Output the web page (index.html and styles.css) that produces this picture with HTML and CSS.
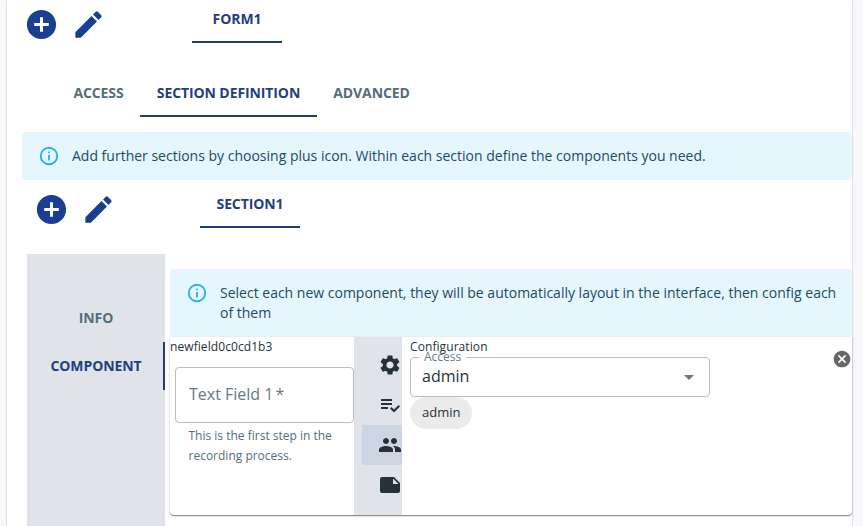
FILE: index.html
```html
<!DOCTYPE html>
<html lang="en">
<head>
<meta charset="utf-8">
<title>Form builder</title>
<link rel="stylesheet" href="styles.css">
</head>
<body>
<svg class="defs" aria-hidden="true">
  <symbol id="add" viewBox="0 0 24 24"><path d="M12 2C6.480 2 2 6.480 2 12s4.480 10 10 10 10-4.480 10-10S17.520 2 12 2zm5 11h-4v4h-2v-4H7v-2h4V7h2v4h4v2z"/></symbol>
  <symbol id="edit" viewBox="0 0 24 24"><path d="M3 17.250V21h3.750L17.810 9.940l-3.750-3.750L3 17.250zM20.710 7.040c.39-.39.39-1.020 0-1.410l-2.340-2.340a1 1 0 0 0-1.410 0l-1.830 1.830 3.750 3.750 1.830-1.830z"/></symbol>
  <symbol id="info" viewBox="0 0 24 24"><path d="M11 7h2v2h-2zm0 4h2v6h-2zm1-9a10 10 0 1 0 0 20 10 10 0 0 0 0-20zm0 18a8 8 0 1 1 0-16 8 8 0 0 1 0 16z"/></symbol>
</svg>
<main class="card">
  <div class="toolbar">
    <svg class="action"><use href="#add"/></svg>
    <svg class="action"><use href="#edit"/></svg>
    <button class="tab active form-tab">FORM1</button>
  </div>
  <nav class="tabs">
    <button class="tab">ACCESS</button>
    <button class="tab active">SECTION DEFINITION</button>
    <button class="tab">ADVANCED</button>
  </nav>
  <div class="alert">
    <svg class="alert-icon"><use href="#info"/></svg>
    <p>Add further sections by choosing plus icon. Within each section define the components you need.</p>
  </div>
  <div class="toolbar section-bar">
    <svg class="action"><use href="#add"/></svg>
    <svg class="action"><use href="#edit"/></svg>
    <button class="tab active section-tab">SECTION1</button>
  </div>
  <section class="workspace">
    <nav class="side">
      <button class="tab">INFO</button>
      <button class="tab active">COMPONENT</button>
    </nav>
    <div class="content">
      <div class="alert tall">
        <svg class="alert-icon"><use href="#info"/></svg>
        <p>Select each new component, they will be automatically layout in the interface, then config each of them</p>
      </div>
      <div class="paper">
        <div class="preview">
          <div class="caption">newfield0c0cd1b3</div>
          <div class="field">Text Field 1<span class="star">*</span></div>
          <p class="helper">This is the first step in the recording process.</p>
        </div>
        <div class="rail">
          <div class="rail-item"><svg viewBox="0 0 24 24"><path d="M19.140 12.940c.04-.3.060-.61.060-.94 0-.32-.02-.64-.07-.94l2.030-1.580c.18-.14.23-.41.12-.61l-1.920-3.320c-.12-.22-.37-.29-.59-.22l-2.390.96c-.5-.38-1.030-.7-1.620-.94l-.36-2.540c-.04-.24-.24-.41-.48-.41h-3.840c-.24 0-.43.17-.47.41l-.36 2.540c-.59.24-1.130.57-1.620.94l-2.390-.96c-.22-.08-.47 0-.59.22L2.740 8.870c-.12.21-.08.47.12.61l2.030 1.580c-.05.3-.09.63-.09.94s.02.64.07.94l-2.030 1.580c-.18.14-.23.41-.12.61l1.920 3.320c.12.22.37.29.59.22l2.390-.96c.5.38 1.030.7 1.620.94l.36 2.540c.05.24.24.41.48.41h3.840c.24 0 .44-.17.47-.41l.36-2.540c.59-.24 1.130-.56 1.620-.94l2.390.96c.22.08.47 0 .59-.22l1.920-3.320c.12-.22.070-.47-.12-.61l-2.010-1.580zM12 15.600c-1.980 0-3.600-1.620-3.600-3.600s1.620-3.600 3.600-3.600 3.600 1.620 3.600 3.600-1.620 3.600-3.600 3.600z"/></svg></div>
          <div class="rail-item"><svg viewBox="0 0 24 24"><path d="M14 10H3v2h11v-2zm0-4H3v2h11V6zM3 14h7v2H3zM20.500 11.900L22 13.400l-5.990 6-4.010-4 1.410-1.410 2.600 2.590z"/></svg></div>
          <div class="rail-item selected"><svg viewBox="0 0 24 24"><path d="M16 11c1.660 0 2.990-1.340 2.990-3S17.660 5 16 5s-3 1.340-3 3 1.340 3 3 3zm-8 0c1.660 0 2.990-1.340 2.990-3S9.660 5 8 5 5 6.340 5 8s1.340 3 3 3zm0 2c-2.330 0-7 1.170-7 3.500V19h14v-2.500c0-2.330-4.670-3.500-7-3.500zm8 0c-.29 0-.62.02-.97.050 1.160.84 1.970 1.970 1.970 3.450V19h6v-2.500c0-2.330-4.670-3.500-7-3.500z"/></svg></div>
          <div class="rail-item"><svg viewBox="0 0 24 24"><path fill-rule="evenodd" d="M4 4h12l6 6v8c0 1.100-.9 2-2 2H4c-1.100 0-2-.9-2-2V6c0-1.100.9-2 2-2zm11 1.500V11h5.500z"/></svg></div>
        </div>
        <div class="config">
          <div class="caption">Configuration</div>
          <div class="select">
            <span class="select-label">Access</span>
            <span>admin</span>
            <svg viewBox="0 0 24 24"><path d="M7 10l5 5 5-5z"/></svg>
          </div>
          <span class="chip">admin</span>
        </div>
        <svg class="close" viewBox="0 0 24 24"><path d="M12 2C6.470 2 2 6.470 2 12s4.470 10 10 10 10-4.470 10-10S17.530 2 12 2zm5 13.590L15.590 17 12 13.410 8.410 17 7 15.590 10.590 12 7 8.410 8.410 7 12 10.590 15.590 7 17 8.410 13.410 12 17 15.590z"/></svg>
      </div>
    </div>
  </section>
</main>
</body>
</html>
```
FILE: styles.css
```css
* { box-sizing: border-box; }
body {
  margin: 0;
  height: 526px;
  overflow: hidden;
  background: #f9f9fc;
  font: 14px/20px "Open Sans", sans-serif;
  color: #263238;
}
p { margin: 0; }
.defs { position: absolute; width: 0; height: 0; }
.card {
  width: 845px;
  height: 526px;
  margin-left: 7px;
  background: #fff;
  box-shadow: 0 0 2px rgba(60, 70, 90, .35);
  display: flex;
  flex-direction: column;
}
.toolbar {
  display: flex;
  height: 43px;
  padding: 7px 0 0 17px;
  flex: none;
}
.action { width: 35px; height: 35px; margin-right: 12px; fill: #1a3e92; flex: none; }
.tab {
  height: 48px;
  padding: 0 14px;
  border: 0;
  background: none;
  font: 700 14px/24px "Open Sans", sans-serif;
  letter-spacing: -.1px;
  color: #546e7a;
  white-space: nowrap;
}
.tab.active { color: #233f80; box-shadow: inset 0 -2px #233b75; }
.form-tab { width: 90px; margin: -12px 0 0 74px; }
.section-bar { height: 48px; padding: 12px 0 0 27px; }
.section-tab { width: 100px; margin: -12px 0 0 72px; }
.tabs { display: flex; flex: none; margin: 26px 0 15px 50px; }
.tabs .tab:nth-child(1) { width: 83px; }
.tabs .tab:nth-child(2) { width: 177px; }
.tabs .tab:nth-child(3) { width: 109px; }
.alert {
  display: flex;
  flex: none;
  height: 48px;
  margin-left: 15px;
  padding: 14px 16px;
  border-radius: 4px;
  background: #e5f6fd;
  color: #1d4b63;
}
.alert-icon { width: 22px; height: 22px; margin: -1px 12px 0 0; fill: #29b1ea; flex: none; }
.alert.tall { height: 68px; margin: 0; padding-right: 12px; }
.workspace { display: flex; flex: 1; min-height: 0; margin: 26px 0 0 20px; }
.side { width: 138px; flex: none; padding-top: 40px; background: #e0e4e8; display: flex; flex-direction: column; }
.side .tab.active { box-shadow: inset -2px 0 #233b75; }
.content { flex: 1; min-width: 0; padding: 15px 0 0 5px; }
.paper {
  display: flex;
  height: 178px;
  border-radius: 0 0 4px 4px;
  box-shadow: 0 1px 1px rgba(0, 0, 0, .42), 0 1px 3px rgba(0, 0, 0, .15);
}
.caption { font-size: 12px; height: 20px; white-space: nowrap; letter-spacing: .08px; }
.preview { width: 184px; flex: none; }
.field {
  width: 179px;
  height: 56px;
  margin: 10px 0 3px 5px;
  padding: 0 13px;
  border: 1px solid #bdbdbd;
  border-radius: 4px;
  font-size: 16px;
  line-height: 53px;
  color: #667985;
}
.star { margin-left: 2px; }
.helper { margin-left: 18.5px; font-size: 12px; color: #546e7a; }
.rail { width: 48px; flex: none; padding: 8px 0 0 8px; background: #e0e4e8; overflow: hidden; }
.rail-item { height: 40px; padding: 8px 0 0 16px; }
.rail-item svg { display: block; width: 24px; height: 24px; fill: #263238; overflow: visible; }
.selected { background: #cfd6e3; }
.config { flex: 1; padding-left: 8px; }
.select {
  position: relative;
  display: flex;
  justify-content: space-between;
  align-items: center;
  width: 300px;
  height: 40px;
  padding: 0 8px 2px 11px;
  border: 1px solid #bdbdbd;
  border-radius: 4px;
  font-size: 16px;
}
.select svg { width: 24px; height: 24px; fill: #757575; margin-top: 2px; }
.select-label {
  position: absolute;
  left: 8px;
  top: -7px;
  padding: 0 5px;
  background: linear-gradient(#fff, #fff) 0 5px / 100% 3px no-repeat;
  font-size: 12px;
  line-height: 12px;
  color: #667985;
}
.chip {
  display: block;
  width: 62px;
  height: 32px;
  padding: 0 12px;
  border-radius: 16px;
  background: #ebebeb;
  font-size: 13px;
  line-height: 31px;
}
.close { width: 20px; height: 20px; margin-top: 12px; fill: #666; flex: none; }
```
